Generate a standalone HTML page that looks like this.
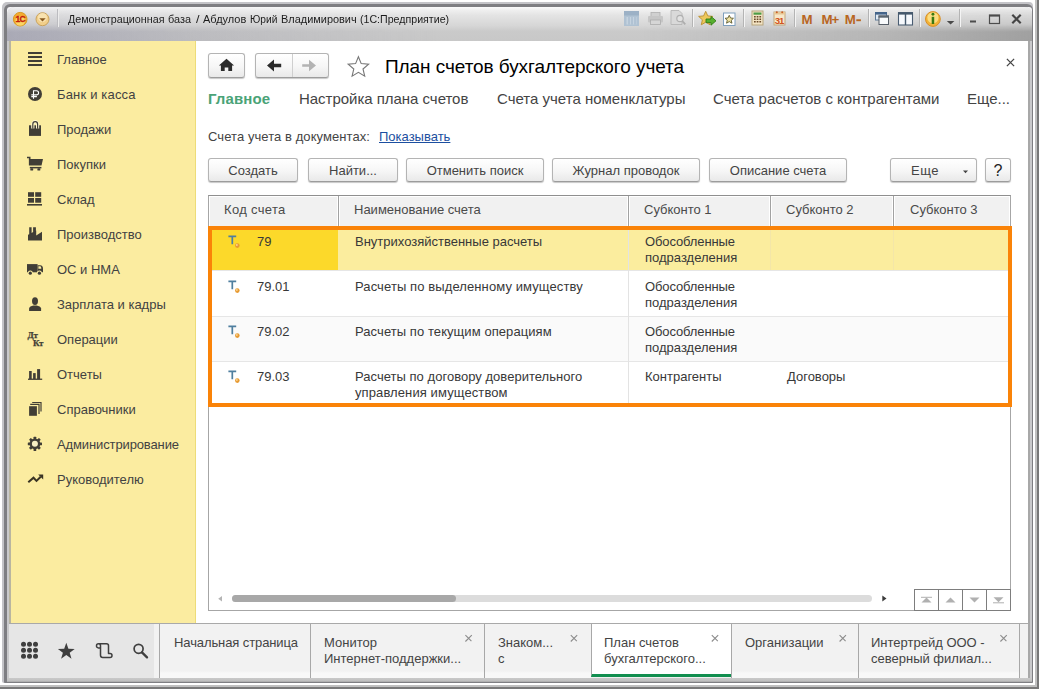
<!DOCTYPE html>
<html lang="ru">
<head>
<meta charset="utf-8">
<title>1C</title>
<style>
*{box-sizing:border-box;margin:0;padding:0}
html,body{width:1039px;height:689px;overflow:hidden;background:#fff}
body{font-family:"Liberation Sans",sans-serif;font-size:13px;color:#333;position:relative}
.abs{position:absolute}
.nw{white-space:nowrap}
/* window frame */
#shR1{left:1035px;top:0;width:2px;height:689px;background:#c0c0c0}
#shR2{left:1037px;top:0;width:2px;height:689px;background:#787878}
#shB1{left:0;top:685px;width:1037px;height:2px;background:#c0c0c0}
#shB2{left:0;top:687px;width:1039px;height:2px;background:#787878}
#fr0{left:2px;top:2px;width:1031px;height:681px;background:#c4c4c8;border-radius:5px 4px 2px 2px}
#fr1{left:4px;top:4px;width:1029px;height:679px;background:#7e7e82;border-radius:6px 6px 1px 1px}
#frW{left:7px;top:7px;width:1025px;height:8px;background:#f4f4f6;border-radius:3px 3px 0 0}
#fr2{left:7px;top:7px;width:1025px;height:675px;background:#c9c9cb;border-radius:8px 7px 0 0}
#frR{left:1028px;top:41px;width:2px;height:640px;background:#a8a8a8}
#frL{left:9px;top:41px;width:2px;height:582px;background:#b9b5a0}
#frB{left:7px;top:678px;width:1025px;height:4px;background:linear-gradient(#c9c9c9,#c2c2c2 60%,#a8a8a8)}
#titlebar{left:7px;top:7px;width:1025px;height:34px;background:linear-gradient(#fbfbfb 0,#f0f0f0 3px,#e4e4e4 8px,#d6d6d6 19px,#cacaca 24px,#c8c8c8 34px);border-radius:8px 7px 0 0}
#stripe{left:7px;top:7px;width:1025px;height:34px;border-radius:8px 7px 0 0;-webkit-mask-image:linear-gradient(rgba(0,0,0,.12) 0,rgba(0,0,0,.3) 17px,#000 25px);mask-image:linear-gradient(rgba(0,0,0,.12) 0,rgba(0,0,0,.3) 17px,#000 25px);background:linear-gradient(90deg,rgba(150,150,170,.62) 0,rgba(160,160,172,.32) 18%,rgba(190,190,190,0) 42%,rgba(180,180,180,0) 62%,rgba(140,140,140,.3) 85%,rgba(120,120,120,.5) 100%)}
#title{left:68px;top:12.5px;font-size:11.5px;color:#1c1c1c}
#title span{position:absolute;top:0;transform-origin:0 0;white-space:nowrap}
/* sidebar */
#side{left:11px;top:41px;width:184px;height:582px;background:#fbeca0}
#sideline{left:195px;top:41px;width:1px;height:582px;background:#eddc78}
.si{left:57px;font-size:13px;color:#424242}
/* main */
#main{left:196px;top:41px;width:832px;height:582px;background:#fff}
.btn{border:1px solid #b4b4b4;border-bottom-color:#9c9c9c;border-radius:3px;background:linear-gradient(#ffffff,#f6f6f6 55%,#e9e9e9);box-shadow:0 1px 1px rgba(0,0,0,.22);height:24px;font-size:13px;color:#444;text-align:center;line-height:23px}
.nav{font-size:15px;color:#444;top:90px}
.th{top:196px;height:30px;background:#f1f1f1;box-shadow:inset 1px 1px 0 #fff,inset -1px 0 0 #fff;font-size:13px;color:#4a4a4a;line-height:28px;padding-left:15px}
.td{font-size:13px;color:#383838;line-height:16px}
.vl{width:1px;background:#e3e3e3}
.hl{height:1px;background:#e6e6e6;left:209px;width:801px}
/* bottom */
#bot{left:9px;top:623px;width:1019px;height:55px;background:#f2f2f2;border-top:1px solid #a9a9a9}
#botl{left:9px;top:624px;width:145px;height:54px;background:#e6e6e6}
.tab{top:624px;height:54px;font-size:13px;color:#444;line-height:16px;border-left:1px solid #a8a8a8;background:linear-gradient(#f2f2f2 47px,#f8f8f8 49px)}
.tab span{position:absolute;left:12px;top:11px;white-space:nowrap}
.tx{position:absolute;top:7px;font-size:12px;color:#777}
</style>
</head>
<body>
<div id="shR1" class="abs"></div><div id="shR2" class="abs"></div><div id="shB1" class="abs"></div><div id="shB2" class="abs"></div>
<div id="fr0" class="abs"></div><div id="fr1" class="abs"></div><div id="frW" class="abs"></div><div id="fr2" class="abs"></div>
<div id="frR" class="abs"></div><div id="frL" class="abs"></div><div id="frB" class="abs"></div>
<div id="titlebar" class="abs"></div>
<div id="stripe" class="abs"></div>
<div id="title" class="abs nw"><span style="left:0.0px;transform:scaleX(0.933)">Демонстрационная</span><span style="left:100.0px;transform:scaleX(0.948)">база</span><span style="left:128.0px;transform:scaleX(1.094)">/</span><span style="left:135.0px;transform:scaleX(0.956)">Абдулов</span><span style="left:181.6px;transform:scaleX(0.887)">Юрий</span><span style="left:212.6px;transform:scaleX(0.951)">Владимирович</span><span style="left:292.4px;transform:scaleX(0.924)">(1С:Предприятие)</span></div>

<div id="side" class="abs"></div>
<div id="sideline" class="abs"></div>
<div class="abs si nw" style="top:52px">Главное</div>
<div class="abs si nw" style="top:87px;letter-spacing:.18px">Банк и касса</div>
<div class="abs si nw" style="top:122px">Продажи</div>
<div class="abs si nw" style="top:157px">Покупки</div>
<div class="abs si nw" style="top:192px">Склад</div>
<div class="abs si nw" style="top:227px">Производство</div>
<div class="abs si nw" style="top:262px">ОС и НМА</div>
<div class="abs si nw" style="top:297px">Зарплата и кадры</div>
<div class="abs si nw" style="top:332px">Операции</div>
<div class="abs si nw" style="top:367px">Отчеты</div>
<div class="abs si nw" style="top:402px">Справочники</div>
<div class="abs si nw" style="top:437px;letter-spacing:-.12px">Администрирование</div>
<div class="abs si nw" style="top:472px">Руководителю</div>

<div id="main" class="abs"></div>

<!-- nav buttons -->
<div class="abs btn" style="left:208px;top:53px;width:37px;height:25px"></div>
<div class="abs btn" style="left:255px;top:53px;width:74px;height:25px"></div>
<div class="abs nw" style="left:385px;top:56px;font-size:19px;color:#000;letter-spacing:-0.07px">План счетов бухгалтерского учета</div>

<div class="abs nav nw" style="left:208px;font-weight:bold;color:#4aa377;letter-spacing:.1px">Главное</div>
<div class="abs nav nw" style="left:299px;letter-spacing:-0.03px">Настройка плана счетов</div>
<div class="abs nav nw" style="left:497px">Счета учета номенклатуры</div>
<div class="abs nav nw" style="left:713px">Счета расчетов с контрагентами</div>
<div class="abs nav nw" style="left:967px">Еще...</div>

<div class="abs nw" style="left:208px;top:129px;font-size:13px;color:#444;letter-spacing:.07px">Счета учета в документах:</div>
<div class="abs nw" style="left:379px;top:129px;font-size:13px;color:#1c4fa0;text-decoration:underline">Показывать</div>

<div class="abs btn" style="left:208px;top:158px;width:90px">Создать</div>
<div class="abs btn" style="left:308px;top:158px;width:90px">Найти...</div>
<div class="abs btn" style="left:406px;top:158px;width:138px">Отменить поиск</div>
<div class="abs btn" style="left:552px;top:158px;width:148px">Журнал проводок</div>
<div class="abs btn" style="left:709px;top:158px;width:138px">Описание счета</div>
<div class="abs btn" style="left:890px;top:158px;width:87px;text-align:left;padding-left:20px;letter-spacing:.5px">Еще</div>
<div class="abs btn" style="left:985px;top:158px;width:26px;color:#222;font-size:16px">?</div>

<!-- table -->
<div class="abs" style="left:208px;top:195px;width:803px;height:416px;border:1px solid #a6a6a6;border-top-color:#8f8f8f;background:#fff"></div>
<div class="abs th nw" style="left:209px;width:129px;letter-spacing:.33px">Код счета</div>
<div class="abs th nw" style="left:339px;width:289px">Наименование счета</div>
<div class="abs th nw" style="left:629px;width:141px">Субконто 1</div>
<div class="abs th nw" style="left:771px;width:122px">Субконто 2</div>
<div class="abs th nw" style="left:894px;width:116px;padding-left:16px">Субконто 3</div>
<div class="abs vl" style="left:338px;top:196px;height:30px;background:#a2a2a2"></div>
<div class="abs vl" style="left:628px;top:196px;height:30px;background:#a2a2a2"></div>
<div class="abs vl" style="left:770px;top:196px;height:30px;background:#a2a2a2"></div>
<div class="abs vl" style="left:893px;top:196px;height:30px;background:#a2a2a2"></div>

<!-- rows -->
<div class="abs" style="left:209px;top:226px;width:801px;height:44px;background:#fbed9e"></div>
<div class="abs" style="left:209px;top:226px;width:129px;height:44px;background:#fcd92a"></div>
<div class="abs" style="left:209px;top:316px;width:801px;height:45px;background:#fafafa"></div>
<div class="abs hl" style="top:270px"></div>
<div class="abs hl" style="top:316px"></div>
<div class="abs hl" style="top:361px"></div>
<div class="abs vl" style="left:628px;top:226px;height:179px"></div>
<div class="abs vl" style="left:770px;top:226px;height:44px;background:#f3e6a8"></div>
<div class="abs vl" style="left:893px;top:226px;height:44px;background:#f3e6a8"></div>

<div class="abs td nw" style="left:257px;top:234px">79</div>
<div class="abs td nw" style="left:257px;top:279px">79.01</div>
<div class="abs td nw" style="left:257px;top:324px">79.02</div>
<div class="abs td nw" style="left:257px;top:369px">79.03</div>
<div class="abs td nw" style="left:355px;top:234px">Внутрихозяйственные расчеты</div>
<div class="abs td nw" style="left:355px;top:279px;letter-spacing:.1px">Расчеты по выделенному имуществу</div>
<div class="abs td nw" style="left:355px;top:324px;letter-spacing:.07px">Расчеты по текущим операциям</div>
<div class="abs td nw" style="left:355px;top:369px"><span style="letter-spacing:.03px">Расчеты по договору доверительного</span><br><span style="letter-spacing:.1px">управления имуществом</span></div>
<div class="abs td nw" style="left:645px;top:234px"><span style="letter-spacing:-.12px">Обособленные</span><br>подразделения</div>
<div class="abs td nw" style="left:645px;top:279px"><span style="letter-spacing:-.12px">Обособленные</span><br>подразделения</div>
<div class="abs td nw" style="left:645px;top:324px"><span style="letter-spacing:-.12px">Обособленные</span><br>подразделения</div>
<div class="abs td nw" style="left:645px;top:369px">Контрагенты</div>
<div class="abs td nw" style="left:787px;top:369px">Договоры</div>

<!-- orange annotation -->
<div class="abs" style="left:208px;top:226px;width:804px;height:181px;border:4px solid #fa8308"></div>

<!-- scrollbar -->
<div class="abs" style="left:232px;top:595px;width:640px;height:7px;border-radius:4px;background:#dcdcdc"></div>
<div class="abs" style="left:232px;top:595px;width:224px;height:7px;border-radius:4px;background:#a8a8a8"></div>

<!-- bottom -->
<div id="bot" class="abs"></div>
<div id="botl" class="abs"></div>
<div class="abs tab" style="left:159px;width:152px"><span style="left:14px;letter-spacing:-.1px">Начальная страница</span></div>
<div class="abs tab" style="left:310px;width:174px"><span style="left:13px">Монитор<br>Интернет-поддержки...</span></div>
<div class="abs tab" style="left:484px;width:107px"><span style="left:13px">Знаком...<br>с</span></div>
<div class="abs tab" style="left:591px;width:140px;height:53px;background:#fff;border-bottom:3px solid #128f50"><span style="left:12px">План счетов<br>бухгалтерского...</span></div>
<div class="abs tab" style="left:731px;width:127px"><span style="left:13px">Организации</span></div>
<div class="abs tab" style="left:858px;width:162px;border-right:1px solid #a8a8a8"><span>Интертрейд ООО -<br>северный филиал...</span></div>

<!-- ICONS OVERLAY -->
<svg class="abs" style="left:0;top:0" width="1039" height="689" viewBox="0 0 1039 689">
<g id="side-icons" fill="#413e36" stroke="none">
  <!-- hamburger -->
  <rect x="28" y="52" width="14" height="2"/><rect x="28" y="56" width="14" height="2"/><rect x="28" y="60" width="14" height="2"/><rect x="28" y="64" width="14" height="2"/>
  <!-- ruble -->
  <circle cx="35" cy="94" r="7"/>
  <path d="M33.5 98.7V90.7h3a2.1 2.1 0 0 1 0 4.2h-5.2M31.3 96.6h5.6" fill="none" stroke="#fff" stroke-width="1.1"/>
  <!-- bag -->
  <rect x="29" y="125.3" width="12" height="10.6"/>
  <path d="M32.8 128.5v-4.2a2.4 2.6 0 0 1 4.8 0v4.2" fill="none" stroke="#fff7d0" stroke-width="3.2"/>
  <path d="M32.8 128.8v-4.5a2.4 2.6 0 0 1 4.8 0v4.5" fill="none" stroke="#413e36" stroke-width="1.2"/>
  <!-- cart -->
  <path d="M27 157.500h2.700v2" fill="none" stroke="#413e36" stroke-width="1.600"/>
  <path d="M28.900 159.100h14.100l-1.500 6.400h-12.600z"/>
  <rect x="29.800" y="166.900" width="11.600" height="1.500"/>
  <rect x="30.300" y="168.300" width="2.900" height="2.300" rx="0.700"/><rect x="37.400" y="168.300" width="2.900" height="2.300" rx="0.700"/>
  <!-- warehouse -->
  <rect x="28" y="192.200" width="6" height="4.600"/><rect x="35.200" y="192.200" width="6" height="4.600"/>
  <rect x="28" y="198" width="6" height="4.700"/><rect x="35.200" y="198" width="6" height="4.700"/>
  <rect x="27" y="204" width="15" height="1.600"/>
  <!-- factory -->
  <path d="M28 240.500V234.800L29.200 234.200V227.200h2.400V233L33.100 232.100V227.200h2.800v3.500L36.200 230.600V235.600L42 231.800V240.500z"/>
  <!-- truck -->
  <rect x="27" y="264.100" width="10.600" height="8.200"/>
  <path d="M37.600 265.200h2.600q2.800 0 2.800 3.600v3.500h-5.400z"/>
  <path d="M38.400 266.300h1.700q1.200 0 1.200 2.400h-2.900z" fill="#fbeca0"/>
  <circle cx="30.300" cy="273.100" r="2.500" fill="#fbeca0"/><circle cx="39.400" cy="273.100" r="2.500" fill="#fbeca0"/>
  <circle cx="30.300" cy="273.200" r="1.600"/><circle cx="39.400" cy="273.200" r="1.600"/>
  <!-- person -->
  <ellipse cx="35" cy="301.100" rx="3" ry="3.900"/>
  <path d="M29.100 310.900v-2.400c0-1.700 2.200-2.400 4.300-3h3.200c2.100.6 4.500 1.300 4.500 3v2.400z"/>
  <!-- DtKt -->
  <text x="27.600" y="337.700" font-family="Liberation Serif,serif" font-weight="bold" font-size="9" letter-spacing="-0.300" stroke="#413e36" stroke-width=".25">Дт</text>
  <text x="32.900" y="345.900" font-family="Liberation Serif,serif" font-weight="bold" font-size="9" letter-spacing="-0.300" stroke="#413e36" stroke-width=".25">Кт</text>
  <!-- reports -->
  <rect x="29.100" y="371" width="2.600" height="8"/><rect x="33.100" y="373.100" width="2.600" height="6"/><rect x="37.100" y="369.100" width="3" height="10"/>
  <rect x="28" y="378.600" width="14.200" height="1.300"/>
  <!-- docs -->
  <path d="M32.200 402.500H41V411.600" fill="none" stroke="#413e36" stroke-width="1.200"/>
  <path d="M30.200 404.400H39V414" fill="none" stroke="#413e36" stroke-width="1.200"/>
  <rect x="29.100" y="406.200" width="7.800" height="9.600"/>
  <!-- gear -->
  <g transform="translate(34.900 443.800)">
    <g id="teeth"><rect x="-1.350" y="-7.100" width="2.700" height="14.200" rx="0.500"/><rect x="-1.350" y="-7.100" width="2.700" height="14.200" rx="0.500" transform="rotate(45)"/><rect x="-1.350" y="-7.100" width="2.700" height="14.200" rx="0.500" transform="rotate(90)"/><rect x="-1.350" y="-7.100" width="2.700" height="14.200" rx="0.500" transform="rotate(135)"/></g>
    <circle r="5.400"/><circle r="3" fill="#f7efc4"/>
  </g>
  <!-- trend -->
  <path d="M28.3 482.3l5.2-4.6 3 3.2 4.2-4.2" fill="none" stroke="#3a3424" stroke-width="2" stroke-linejoin="miter"/>
  <path d="M38.2 474.4h5v5z" fill="#3a3424"/>
</g>

<g id="tb-icons">
  <!-- separators -->
  <g stroke="#b4b4b4" stroke-width="1"><path d="M692.5 9v18M743.5 9v18M794.5 9v18M868.5 9v18M919.5 9v18M959.5 9v18"/></g>
  <g stroke="#f4f4f4" stroke-width="1"><path d="M693.5 9v18M744.5 9v18M795.5 9v18M869.5 9v18M920.5 9v18M960.5 9v18"/></g>
  <!-- save (disabled) -->
  <rect x="624" y="11" width="15" height="15" fill="#b0c2d3"/>
  <rect x="624" y="11" width="15" height="4.5" fill="#9cb1c6"/>
  <rect x="626.5" y="17" width="10" height="7.5" fill="#c5d3e0"/>
  <path d="M629 17v7.5M632 17v7.5M635 17v7.5" stroke="#9db2c7" stroke-width="1"/>
  <!-- print (disabled) -->
  <rect x="651" y="12.5" width="9" height="4" fill="#d0d0d0" stroke="#b0b0b0" stroke-width=".8"/>
  <rect x="648" y="16" width="15" height="6.5" rx="1" fill="#c6c6c6"/>
  <rect x="650.5" y="20" width="10" height="4.5" fill="#d6d6d6" stroke="#acacac" stroke-width=".8"/>
  <!-- preview (disabled) -->
  <path d="M671 10.500h8l3 3v11h-11z" fill="#d9d9d9" stroke="#b6b6b6" stroke-width=".9"/>
  <circle cx="680" cy="18.500" r="3.200" fill="#e2e2e2" stroke="#b0b0b0" stroke-width="1.2"/>
  <path d="M682.3 21l3 3.300" stroke="#adadad" stroke-width="1.8"/>
  <!-- star with arrow -->
  <path d="M705.700 11.300l2.100 4.600 5 .500-3.800 3.400 1.100 5-4.400-2.600-4.400 2.600 1.100-5-3.800-3.400 5-.500z" fill="#edc75a" stroke="#b98d2e" stroke-width=".9"/>
  <path d="M706 19h5v-2.600l5 4.400-5 4.400v-2.600h-5z" fill="#58b030" stroke="#2f7d14" stroke-width=".9"/>
  <!-- star page -->
  <rect x="723.500" y="13" width="11.500" height="12.500" fill="#fff" stroke="#7f9fbd" stroke-width="1"/>
  <path d="M729.250 15.300l1.300 2.700 2.900.300-2.200 2 .7 2.900-2.700-1.600-2.700 1.600.7-2.900-2.200-2 2.900-.300z" fill="#f1e3a0" stroke="#5d5a2c" stroke-width=".9"/>
  <!-- calculator -->
  <rect x="752" y="11" width="11" height="14" fill="#f3e4c4" stroke="#b7a57d" stroke-width="1"/>
  <rect x="753.500" y="12.500" width="8" height="2.200" fill="#4c9c46"/>
  <g fill="#6b4a2a"><rect x="754" y="16" width="1.700" height="1.500"/><rect x="756.700" y="16" width="1.700" height="1.500"/><rect x="759.400" y="16" width="1.700" height="1.500"/>
  <rect x="754" y="18.500" width="1.700" height="1.500"/><rect x="756.700" y="18.500" width="1.700" height="1.500"/><rect x="759.400" y="18.500" width="1.700" height="1.500"/>
  <rect x="754" y="21" width="1.700" height="1.500"/><rect x="756.700" y="21" width="1.700" height="1.500"/><rect x="759.400" y="21" width="1.700" height="1.500"/></g>
  <!-- calendar -->
  <rect x="774" y="12" width="11" height="13" fill="#f7e7c9" stroke="#bfa67c" stroke-width="1"/>
  <rect x="774" y="12" width="11" height="2.500" fill="#e7c896"/>
  <circle cx="776.800" cy="12.200" r="1" fill="#c8602a"/><circle cx="782.200" cy="12.200" r="1" fill="#c8602a"/>
  <text x="774.700" y="24.100" font-family="Liberation Sans,sans-serif" font-weight="bold" font-size="9.600" fill="#d2551f" letter-spacing="-0.9">31</text>
  <!-- M M+ M- -->
  <g font-family="Liberation Sans,sans-serif" font-weight="bold" font-size="13.300" fill="#b8661f">
    <text x="801.500" y="24">M</text><text x="821.500" y="24" letter-spacing="-1">M+</text><text x="844.700" y="24">M</text>
    <rect x="856.300" y="19.300" width="4.600" height="1.900"/>
  </g>
  <!-- windows -->
  <rect x="875.500" y="12.500" width="11" height="7.500" fill="#dfe9f3" stroke="#5c7896" stroke-width="1"/>
  <rect x="875" y="12" width="12" height="2.600" fill="#44648a"/>
  <rect x="879" y="16" width="9.500" height="8.500" fill="#f8fafc" stroke="#565e68" stroke-width="1"/>
  <rect x="878.500" y="15.500" width="10.500" height="2.200" fill="#5a6570"/>
  <!-- split -->
  <rect x="898.500" y="12.700" width="14" height="12.300" fill="#f6f9fd" stroke="#4a5d72" stroke-width="1.100"/>
  <rect x="898" y="12.200" width="15" height="2.400" fill="#44586c"/>
  <path d="M905.500 14v11" stroke="#44586c" stroke-width="1.400"/>
  <!-- info -->
  <circle cx="932.900" cy="19" r="7.400" fill="#f3b235" stroke="#d8902a" stroke-width="1"/>
  <circle cx="932.900" cy="17.800" r="5.600" fill="#fbe48e" opacity=".85"/>
  <rect x="931.700" y="16.800" width="2.500" height="7.200" fill="#3a7a12"/><circle cx="932.950" cy="14.200" r="1.450" fill="#3a7a12"/>
  <path d="M946.800 21h7.600l-3.800 3.400z" fill="#4a4a4a"/>
  <!-- window controls -->
  <rect x="970" y="20.500" width="6" height="2" fill="#4c4c4c"/>
  <rect x="989.500" y="15" width="10" height="8.500" fill="none" stroke="#4c4c4c" stroke-width="1.200"/>
  <rect x="989.500" y="15" width="10" height="1.600" fill="#4c4c4c"/>
  <path d="M1012.300 14.800l8.400 8.400M1020.700 14.800l-8.400 8.400" stroke="#444" stroke-width="2.200"/>
  <!-- 1C logo -->
  <circle cx="20.200" cy="19.200" r="6.800" fill="#f4ab32" stroke="#d79a20" stroke-width="1"/>
  <circle cx="20.200" cy="21" r="4.800" fill="#fde070" opacity=".8"/>
  <text x="15.600" y="22.300" font-family="Liberation Sans,sans-serif" font-weight="bold" font-size="8.500" fill="#c4200a" stroke="#c4200a" stroke-width=".3" letter-spacing="-0.7">1С</text>
  <!-- dropdown circle -->
  <circle cx="42.500" cy="19.200" r="6.500" fill="#f2cf8a" stroke="#c9a25c" stroke-width="1"/>
  <circle cx="42.500" cy="17.500" r="4.500" fill="#fbe9c0" opacity=".7"/>
  <path d="M39.300 18.200h6.400l-3.200 3.400z" fill="#8a5a20"/>
  <path d="M57.500 9v18" stroke="#bcbcc0"/><path d="M58.500 9v18" stroke="#ececec"/>
</g>
<g id="nav-icons">
  <!-- home -->
  <path d="M226.500 58.800l7.600 6.700h-2v5.500h-3.800v-3.600h-3.600v3.600h-3.800v-5.500h-2z" fill="#2b2b2b"/>
  <!-- divider -->
  <path d="M292.500 54v23" stroke="#cfcfcf"/>
  <!-- back -->
  <path d="M267 65.500l7-6v4.300h7.200v3.400h-7.200v4.300z" fill="#2b2b2b"/>
  <!-- forward -->
  <path d="M316 65.500l-7-5.800v4.600h-6.800v2.400h6.800v4.600z" fill="#b3b3b3"/>
  <!-- star outline -->
  <path d="M358.400 56.800l2.800 6.800 7.400.6-5.600 4.800 1.700 7.200-6.300-3.900-6.300 3.900 1.700-7.200-5.600-4.800 7.400-.6z" fill="#fff" stroke="#777" stroke-width="1.100" stroke-linejoin="miter"/>
  <!-- Еще dropdown arrow -->
  <path d="M963 170.500h5l-2.500 2.800z" fill="#444"/>
</g>

<g id="row-icons">
  <path d="M228.400 236.3h7.800M232.300 236.3v8" stroke="#4f7f9f" stroke-width="1.700" fill="none"/>
  <circle cx="237.300" cy="245.6" r="2.300" fill="#e79a32"/><circle cx="236.800" cy="245.0" r="1" fill="#f9d28e"/>
  <path d="M228.400 281.3h7.800M232.300 281.3v8" stroke="#4f7f9f" stroke-width="1.700" fill="none"/>
  <circle cx="237.300" cy="290.6" r="2.300" fill="#e79a32"/><circle cx="236.800" cy="290.0" r="1" fill="#f9d28e"/>
  <path d="M228.400 326.3h7.800M232.300 326.3v8" stroke="#4f7f9f" stroke-width="1.700" fill="none"/>
  <circle cx="237.300" cy="335.6" r="2.300" fill="#e79a32"/><circle cx="236.800" cy="335.0" r="1" fill="#f9d28e"/>
  <path d="M228.400 371.3h7.800M232.300 371.3v8" stroke="#4f7f9f" stroke-width="1.700" fill="none"/>
  <circle cx="237.300" cy="380.6" r="2.300" fill="#e79a32"/><circle cx="236.800" cy="380.0" r="1" fill="#f9d28e"/>
</g>
<g id="bot-icons" fill="#3f3f3f">
  <g id="dots">
    <circle cx="23.500" cy="644.300" r="2.500"/><circle cx="29.500" cy="644.300" r="2.500"/><circle cx="35.500" cy="644.300" r="2.500"/>
    <circle cx="23.500" cy="650.300" r="2.500"/><circle cx="29.500" cy="650.300" r="2.500"/><circle cx="35.500" cy="650.300" r="2.500"/>
    <circle cx="23.500" cy="656.300" r="2.500"/><circle cx="29.500" cy="656.300" r="2.500"/><circle cx="35.500" cy="656.300" r="2.500"/>
  </g>
  <path d="M66.300 642.800l2.100 5.900 6.300.2-5 3.800 1.800 6-5.200-3.600-5.200 3.600 1.800-6-5-3.800 6.300-.2z"/>
  <!-- scroll/history icon -->
  <path d="M100.500 648v-2.200a2 2 0 0 0-4 0a1.900 1.900 0 0 0 2 2.100h2v7.300a2.200 2.200 0 0 0 2.200 2.200h7.300a2 2 0 0 0 0-4h-1.500v-7.600a2 2 0 0 0-2-2h-8" fill="none" stroke="#3f3f3f" stroke-width="1.500" stroke-linejoin="round"/>
  <!-- search -->
  <circle cx="138.600" cy="648.800" r="4.500" fill="none" stroke="#3f3f3f" stroke-width="1.700"/>
  <path d="M142 652.400l5 5" stroke="#3f3f3f" stroke-width="2.300" stroke-linecap="round"/>
</g>
<g id="scroll">
  <path d="M222 596v5.400l-3.800-2.700z" fill="#b4b4b4"/>
  <path d="M882.300 595.600v6l4.200-3z" fill="#3a3a3a"/>
  <g fill="none" stroke="#7d7d7d" stroke-width="1"><rect x="914.500" y="589.500" width="96" height="21"/><path d="M938.500 589.500v21M962.500 589.500v21M986.500 589.500v21"/></g>
  <g fill="#b0b0b0">
    <rect x="921" y="596.800" width="11" height="1"/><path d="M926.500 597.500l5 5h-10z"/>
    <path d="M950.500 597.500l5 5h-10z"/>
    <path d="M974.500 602.500l5-5h-10z"/>
    <path d="M998.500 602.300l5-5h-10z"/><rect x="993" y="602.300" width="11" height="1"/>
  </g>
</g>
<g id="crosses">
  <path d="M465.40000000000003 635.0999999999999l6.0 6.0M471.8 635.0999999999999l-6.4 6.4" stroke="#8c8c8c" stroke-width="1.1" fill="none"/>
  <path d="M570.8 635.0999999999999l6.0 6.0M577.2 635.0999999999999l-6.4 6.4" stroke="#8c8c8c" stroke-width="1.1" fill="none"/>
  <path d="M711.8 635.0999999999999l6.0 6.0M718.2 635.0999999999999l-6.4 6.4" stroke="#8c8c8c" stroke-width="1.1" fill="none"/>
  <path d="M839.5999999999999 635.0999999999999l6.0 6.0M846.0 635.0999999999999l-6.4 6.4" stroke="#8c8c8c" stroke-width="1.1" fill="none"/>
  <path d="M1000.4 635.0999999999999l6.0 6.0M1006.8000000000001 635.0999999999999l-6.4 6.4" stroke="#8c8c8c" stroke-width="1.1" fill="none"/>
  <path d="M1006.9 58.9l7.2 7.2M1014.1 58.9l-7.2 7.2" stroke="#454545" stroke-width="1.3" fill="none"/>
</g>
</svg>
</body>
</html>
